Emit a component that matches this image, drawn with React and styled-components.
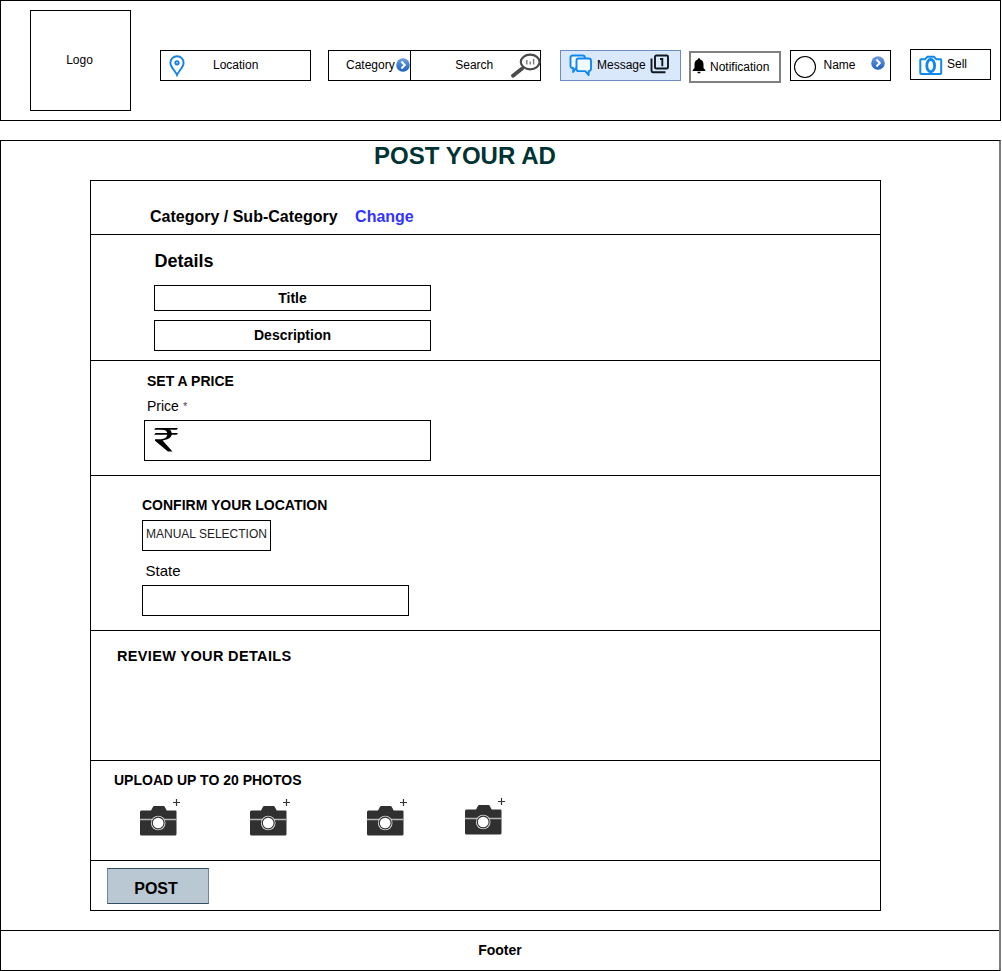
import React from 'react';
import styled, { createGlobalStyle } from 'styled-components';

const GlobalStyle = createGlobalStyle`
  * { box-sizing: border-box; }
  body {
    margin: 0;
    background: #fff;
    color: #000;
    font-family: "Liberation Sans", Arial, sans-serif;
  }
  svg { display: block; flex: none; }
`;

const Page = styled.div`
  width: 1001px;
  height: 971px;
  display: flex;
  flex-direction: column;
  gap: 19px;
`;

const Header = styled.header`
  height: 121px;
  border: 1px solid #000;
  display: flex;
  align-items: flex-start;
  padding-left: 29px;
`;

const Label = styled.span`
  display: block;
  flex: none;
  white-space: nowrap;
  line-height: 20px;
  font-size: ${(p) => p.$size || 12}px;
  font-weight: ${(p) => (p.$bold ? 700 : 400)};
  letter-spacing: ${(p) => p.$spacing || 0}px;
  color: ${(p) => p.$color || 'inherit'};
  margin-top: ${(p) => p.$top || 0}px;
  margin-left: ${(p) => p.$left || 0}px;
`;

const Icon = styled.svg`
  margin-top: ${(p) => p.$top || 0}px;
  margin-left: ${(p) => p.$left || 0}px;
`;

const Logo = styled.div`
  width: 101px;
  height: 101px;
  margin-top: 9px;
  border: 1px solid #000;
  display: flex;
  justify-content: center;
  padding: 39px 2px 0 0;
`;

const NavBox = styled.div`
  flex: none;
  display: flex;
  align-items: flex-start;
  width: ${(p) => p.$width}px;
  height: ${(p) => p.$height || 31}px;
  margin-top: ${(p) => p.$top || 49}px;
  margin-left: ${(p) => p.$gap}px;
  border: ${(p) => p.$border || '1px solid #000'};
  background: ${(p) => p.$fill || '#fff'};
`;

const CategoryPart = styled.div`
  width: 81px;
  height: 29px;
  display: flex;
  align-items: flex-start;
`;

const SearchPart = styled.div`
  flex: 1;
  height: 29px;
  border-left: 1px solid #000;
  display: flex;
  align-items: flex-start;
`;

const Main = styled.main`
  height: 831px;
  border: 1px solid #000;
  border-right: 2px solid #7d7d7d;
  display: flex;
  flex-direction: column;
`;

const PageTitle = styled.h1`
  margin: 1px 0 0 373px;
  height: 38px;
  font-size: 24px;
  line-height: 28px;
  font-weight: 700;
  letter-spacing: 0.05px;
  color: #003333;
  white-space: nowrap;
`;

const Form = styled.form`
  width: 791px;
  height: 731px;
  margin: 0 0 0 89px;
  border: 1px solid #000;
  display: flex;
  flex-direction: column;
`;

const Section = styled.section`
  height: ${(p) => p.$height}px;
  border-bottom: ${(p) => (p.$last ? 0 : '1px solid #000')};
  display: flex;
  flex-direction: column;
  align-items: flex-start;
`;

const Row = styled.div`
  display: flex;
  align-items: flex-start;
`;

const Field = styled.div`
  width: ${(p) => p.$width}px;
  height: ${(p) => p.$height || 31}px;
  margin: ${(p) => p.$top || 0}px 0 0 ${(p) => p.$left}px;
  border: 1px solid #000;
  display: flex;
  align-items: flex-start;
  justify-content: ${(p) => p.$align || 'center'};
`;

const PostButton = styled.button`
  width: 102px;
  height: 36px;
  margin: 7px 0 0 16px;
  padding: 9px 4px 0 0;
  display: flex;
  justify-content: center;
  align-items: flex-start;
  border: 1px solid #314f63;
  border-left-color: #6f8796;
  border-right-color: #6f8796;
  background: #bac8d3;
  color: #000;
  font-family: inherit;
`;

const Footer = styled.footer`
  height: 40px;
  margin-top: 19px;
  border-top: 1px solid #000;
  display: flex;
  justify-content: center;
`;

function PinIcon(props) {
  return (
    <Icon width="16" height="22" viewBox="0 0 16 22" fill="none" stroke="#1482e0" strokeWidth="1.9" {...props}>
      <path d="M8 20C6.600 16.300 1.400 12.300 1.400 7.700a6.600 6.400 0 0 1 13.200 0C14.600 12.300 9.400 16.300 8 20Z" />
      <circle cx="8" cy="7.800" r="1.700" />
    </Icon>
  );
}

function ChevronBadge(props) {
  return (
    <Icon width="14" height="14" viewBox="0 0 14 14" {...props}>
      <defs>
        <linearGradient id="badge" x1="0" y1="0" x2="0" y2="1">
          <stop offset="0" stopColor="#6f9fdc" />
          <stop offset="1" stopColor="#1c5fc4" />
        </linearGradient>
      </defs>
      <circle cx="7" cy="7" r="6.8" fill="url(#badge)" />
      <path d="M5.400 3.500 8.800 7 5.400 10.500" fill="none" stroke="#fff" strokeWidth="2" />
    </Icon>
  );
}

function MagnifierIcon(props) {
  return (
    <Icon width="30" height="25" viewBox="0 0 30 25" fill="none" stroke="#4a4a4a" {...props}>
      <ellipse cx="19.200" cy="9" rx="9.400" ry="7.300" strokeWidth="2.200" />
      <path d="M12.800 14 10.300 16.300" strokeWidth="2.400" />
      <path d="M10.800 15.800 2 22.700" strokeWidth="3.800" strokeLinecap="round" />
      <path d="M15.800 7v4.500M19.200 8.500v3M22.600 6v5.500" strokeWidth="1.400" stroke="#777" />
    </Icon>
  );
}

function ChatIcon(props) {
  return (
    <Icon width="24" height="23" viewBox="0 0 24 23" stroke="#0f88ee" strokeWidth="1.900" strokeLinejoin="round" {...props}>
      <path fill="#f2f8ff" d="M4 1.500h9.500q2.300 0 2.300 2v8.500q0 2-2 2H7L4.200 18V14H3.500Q1.500 14 1.500 11.800V3.700q0-2.200 2.500-2.200Z" />
      <path fill="#f2f8ff" d="M9.500 4.500h10q2.500 0 2.500 2.200v8q0 2.200-2.300 2.400v4L16.300 17.100H9.500q-2 0-2-2.200V6.700q0-2.200 2-2.200Z" />
    </Icon>
  );
}

function CounterIcon(props) {
  return (
    <Icon width="20" height="20" viewBox="0 0 20 20" fill="none" stroke="#111820" strokeWidth="1.9" {...props}>
      <rect x="5" y="1.500" width="13" height="13" rx="1.3" />
      <path d="M1.500 4.500V16.800q0 1.400 1.400 1.400H15.500M10 5h2.300v7.300" />
    </Icon>
  );
}

function BellIcon(props) {
  return (
    <Icon width="14" height="16" viewBox="0 0 14 16" fill="#000" {...props}>
      <path d="M7 .3c.8 0 1.200.5 1.200 1.300C10.600 2.200 11.500 4.200 11.500 6.500v3.400L13.300 12v1H.7v-1L2.500 9.900V6.500C2.500 4.200 3.400 2.200 5.800 1.600 5.800.8 6.200.3 7 .3ZM5.400 13.800h3.200C8.600 14.800 7.900 15.400 7 15.400s-1.600-.6-1.600-1.600Z" />
    </Icon>
  );
}

function AvatarIcon(props) {
  return (
    <Icon width="24" height="24" viewBox="0 0 24 24" fill="none" stroke="#000" {...props}>
      <circle cx="12" cy="12" r="10.500" strokeWidth="1.100" />
    </Icon>
  );
}

function SellCameraIcon(props) {
  return (
    <Icon width="24" height="21" viewBox="0 0 24 21" fill="none" stroke="#0f88ee" strokeWidth="2" strokeLinejoin="round" {...props}>
      <path d="M2 4.200h4.200L8.300 1.800h6.800l2.100 2.400h4.300q.7 0 .7.700v13.200q0 .9-.9.900H2.200q-.9 0-.9-.9V4.900q0-.7.7-.7Z" />
      <ellipse cx="11.700" cy="10.700" rx="3.900" ry="6.200" strokeWidth="2.800" />
    </Icon>
  );
}

function RupeeIcon(props) {
  return (
    <Icon width="26" height="26" viewBox="0 0 26 26" {...props}>
      <path d="M2.500 1H25l-1.300 1.800H1.200ZM2.500 6H25l-1.300 1.800H1.200Z" />
      <path d="M9 1.500h6c2.600 1 3.800 3 3.800 5.300 0 3.600-3.600 6-9.200 6.600L19.500 24.500h-4.600L2 13.800v-1.600h4c5.500 0 8.300-2 8.300-5.300C14.300 4 12 2.500 8 2.500Z" />
    </Icon>
  );
}

function PhotoIcon(props) {
  return (
    <Icon width="42" height="40" viewBox="0 0 42 40" {...props}>
      <path fill="#303030" d="M1.500 12.500H11l2-3.800Q13.400 8 14.200 8h9.300q.8 0 1.200.7l2 3.800h8.800q1 0 1 1V36q0 1.500-1.500 1.500H1.500Q0 37.500 0 36V14Q0 12.500 1.500 12.500Z" />
      <path stroke="#b5b5b5" strokeWidth="1.700" d="M0 21.500h36.500" />
      <circle cx="18.200" cy="25" r="7.300" fill="#ddd" />
      <circle cx="18.200" cy="25" r="5.900" fill="#fff" stroke="#303030" strokeWidth="1.100" />
      <path stroke="#333" strokeWidth="1.200" d="M33 4.500h7M36.500 1v7" />
    </Icon>
  );
}

export default function App() {
  return (
    <>
      <GlobalStyle />
      <Page>
        <Header>
          <Logo><Label>Logo</Label></Logo>
          <NavBox $gap={29} $width={151}>
            <PinIcon $top={4} $left={8} />
            <Label $top={4} $left={28}>Location</Label>
          </NavBox>
          <NavBox $gap={17} $width={213}>
            <CategoryPart>
              <Label $top={4} $left={17}>Category</Label>
              <ChevronBadge $top={7} $left={1} />
            </CategoryPart>
            <SearchPart>
              <Label $top={4} $left={44.5}>Search</Label>
              <MagnifierIcon $top={2} $left={17.5} />
            </SearchPart>
          </NavBox>
          <NavBox $gap={19} $width={121} $border="1px solid #6c8ebf" $fill="#dae8fc">
            <ChatIcon $top={3} $left={8} />
            <Label $top={4} $left={4}>Message</Label>
            <CounterIcon $top={3} $left={4} />
          </NavBox>
          <NavBox $gap={8} $top={50} $width={92} $height={32} $border="2px solid #808080">
            <BellIcon $top={5} $left={1} />
            <Label $top={4} $left={4}>Notification</Label>
          </NavBox>
          <NavBox $gap={9} $width={101}>
            <AvatarIcon $top={4} $left={2} />
            <Label $top={4} $left={6.5}>Name</Label>
            <ChevronBadge $top={5} $left={15} />
          </NavBox>
          <NavBox $gap={19} $top={48} $width={81}>
            <SellCameraIcon $top={5} $left={8} />
            <Label $top={4} $left={4}>Sell</Label>
          </NavBox>
        </Header>

        <Main>
          <PageTitle>POST YOUR AD</PageTitle>
          <Form>
            <Section $height={54}>
              <Row>
                <Label $bold $size={16} $top={26} $left={59}>Category / Sub-Category</Label>
                <Label $bold $size={16} $top={26} $left={17.5} $color="#3333ff">Change</Label>
              </Row>
            </Section>
            <Section $height={126}>
              <Label $bold $size={18} $top={16} $left={63.5}>Details</Label>
              <Field $width={277} $height={26} $top={14} $left={63}>
                <Label $bold $size={14} $top={2}>Title</Label>
              </Field>
              <Field $width={277} $top={9} $left={63}>
                <Label $bold $size={14} $top={4}>Description</Label>
              </Field>
            </Section>
            <Section $height={115}>
              <Label $bold $size={14} $top={10} $left={56}>SET A PRICE</Label>
              <Row>
                <Label $size={14} $top={5} $left={56}>Price</Label>
                <Label $size={11} $top={5} $left={4} $color="#444">*</Label>
              </Row>
              <Field $width={287} $height={41} $top={4} $left={53} $align="flex-start">
                <RupeeIcon $top={6} $left={8} />
              </Field>
            </Section>
            <Section $height={155}>
              <Label $bold $size={14} $top={19} $left={51}>CONFIRM YOUR LOCATION</Label>
              <Field $width={129} $top={5} $left={51}>
                <Label $color="#222" $top={3}>MANUAL SELECTION</Label>
              </Field>
              <Label $size={15} $top={10} $left={54.5}>State</Label>
              <Field $width={267} $top={4} $left={51} />
            </Section>
            <Section $height={130}>
              <Label $bold $size={14.5} $spacing={0.35} $top={15} $left={26}>REVIEW YOUR DETAILS</Label>
            </Section>
            <Section $height={100}>
              <Label $bold $size={14} $top={9} $left={23}>UPLOAD UP TO 20 PHOTOS</Label>
              <Row>
                <PhotoIcon $top={8} $left={49} />
                <PhotoIcon $top={8} $left={68} />
                <PhotoIcon $top={8} $left={74.5} />
                <PhotoIcon $top={7} $left={56.5} />
              </Row>
            </Section>
            <Section $height={49} $last>
              <PostButton type="button"><Label $bold $size={16} $top={1}>POST</Label></PostButton>
            </Section>
          </Form>
          <Footer><Label $bold $size={14} $top={9}>Footer</Label></Footer>
        </Main>
      </Page>
    </>
  );
}
